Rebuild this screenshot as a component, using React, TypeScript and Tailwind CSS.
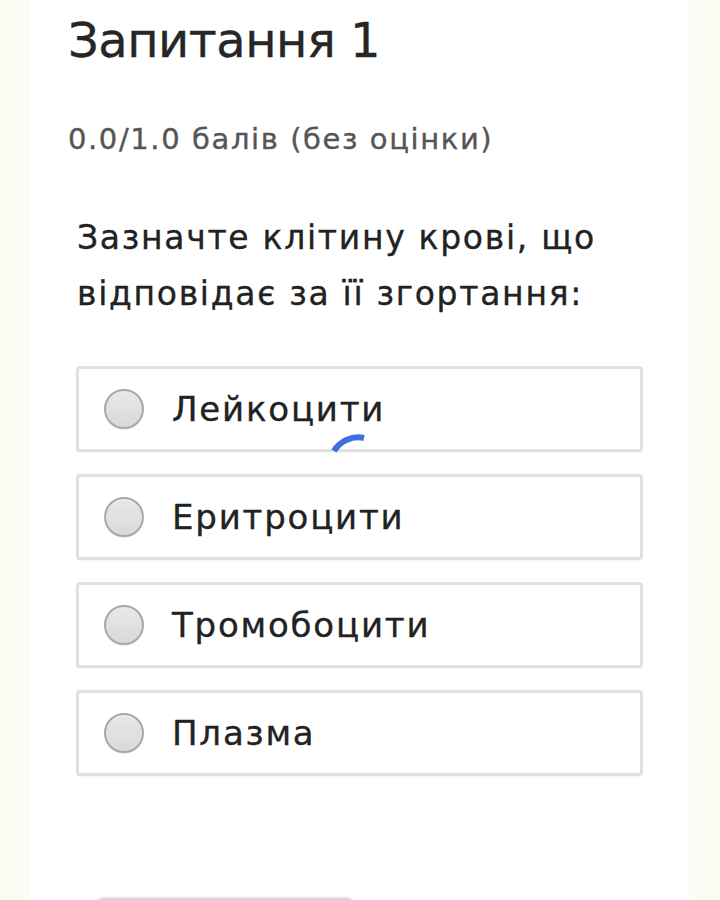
const options = ['Лейкоцити', 'Еритроцити', 'Тромобоцити', 'Плазма'];

function Radio() {
  return (
    <span className="block h-[40px] w-[40px] shrink-0 rounded-full border-2 border-[#a9a9a9] bg-gradient-to-b from-[#e9e9e9] to-[#d9d9d9] shadow-[0_1px_1px_rgba(0,0,0,0.08)]" />
  );
}

function Spinner() {
  return (
    <svg
      className="pointer-events-none absolute left-[251px] top-[62px]"
      width="40"
      height="24"
      viewBox="0 0 40 24"
    >
      <path d="M 4 20 A 28 28 0 0 1 34 7" fill="none" stroke="#3f6ee0" strokeWidth="6" />
    </svg>
  );
}

export default function App() {
  return (
    <div className="min-h-[900px] w-[720px] bg-[#fafdf4] font-['DejaVu_Sans',sans-serif] [-webkit-text-stroke:0.35px_currentColor]">
      <div className="ml-[30px] min-h-[960px] w-[659px] bg-white pt-[16px]">
        <div className="px-[38px]">
          <h1 className="text-[48px] leading-none tracking-[-0.5px] text-[#262626]">Запитання 1</h1>
          <p className="mt-[61px] text-[29px] leading-none tracking-[1.6px] text-[#555555]">
            0.0/1.0 балів (без оцінки)
          </p>
        </div>

        <div className="px-[46px]">
          <p className="mt-[56px] pl-[1px] text-[33px] leading-[56px] tracking-[1.7px] text-[#222222]">
            Зазначте клітину крові, що відповідає за її згортання:
          </p>

          <div className="mt-[44px] flex flex-col gap-[22px]">
            {options.map((opt, i) => (
              <label
                key={opt}
                className="relative flex h-[86px] items-center gap-[28px] rounded-[4px] border-[3px] border-[#e0e0e0] pl-[25px] shadow-[0_1px_2px_rgba(0,0,0,0.04)]"
              >
                <Radio />
                <span className="text-[34px] leading-none tracking-[1.8px] text-[#222222]">{opt}</span>
                {i === 0 && <Spinner />}
              </label>
            ))}
          </div>

          <div className="mt-[122px] ml-[18px] h-[50px] w-[262px] rounded-[10px] border-2 border-[#d6d6d6] shadow-[0_-1px_3px_rgba(0,0,0,0.12)]" />
        </div>
      </div>
    </div>
  );
}
